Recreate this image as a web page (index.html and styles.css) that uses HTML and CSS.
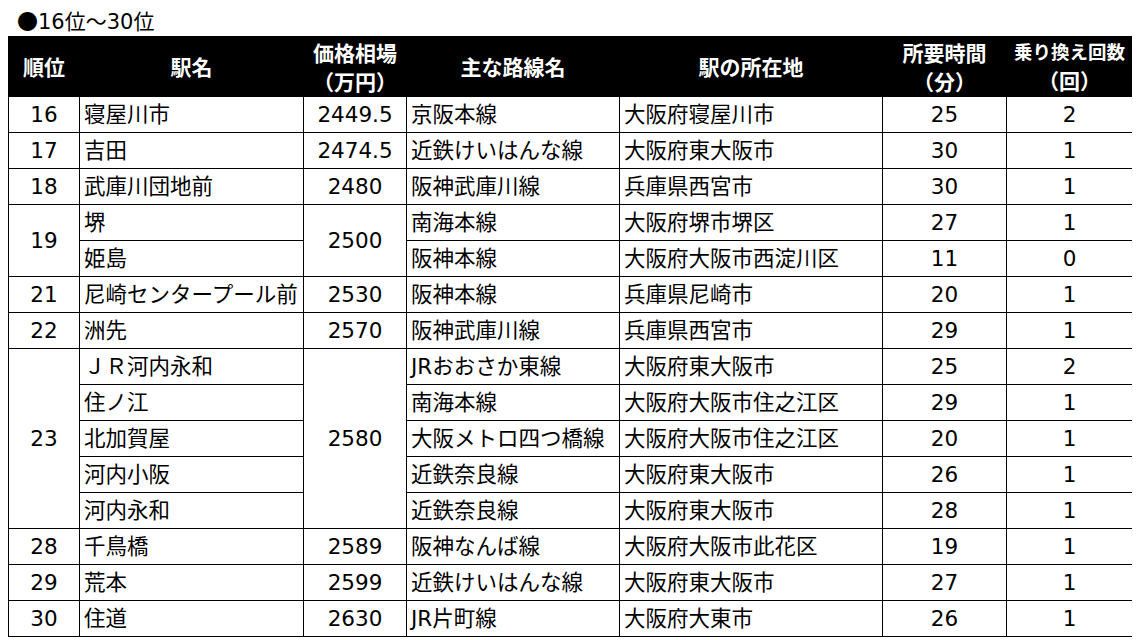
FILE: index.html
```html
<!DOCTYPE html>
<html lang="ja">
<head>
<meta charset="utf-8">
<link rel="stylesheet" href="styles.css">
</head>
<body>
<div class="title"><span class="dot">●</span>16位～30位</div>
<table class="rank">
<colgroup>
<col class="c-rank"><col class="c-name"><col class="c-price"><col class="c-line"><col class="c-loc"><col class="c-time"><col class="c-trans">
</colgroup>
<thead>
<tr>
<th>順位</th><th>駅名</th><th>価格相場<br>（万円）</th><th>主な路線名</th><th>駅の所在地</th><th>所要時間<br>（分）</th><th class="narrow">乗り換え回数<br><span class="wide">（回）</span></th>
</tr>
</thead>
<tbody>
<tr><td class="ctr">16</td><td class="lft">寝屋川市</td><td class="ctr">2449.5</td><td class="lft">京阪本線</td><td class="lft">大阪府寝屋川市</td><td class="ctr">25</td><td class="ctr">2</td></tr>
<tr><td class="ctr">17</td><td class="lft">吉田</td><td class="ctr">2474.5</td><td class="lft">近鉄けいはんな線</td><td class="lft">大阪府東大阪市</td><td class="ctr">30</td><td class="ctr">1</td></tr>
<tr><td class="ctr">18</td><td class="lft">武庫川団地前</td><td class="ctr">2480</td><td class="lft">阪神武庫川線</td><td class="lft">兵庫県西宮市</td><td class="ctr">30</td><td class="ctr">1</td></tr>
<tr><td class="ctr" rowspan="2">19</td><td class="lft">堺</td><td class="ctr" rowspan="2">2500</td><td class="lft">南海本線</td><td class="lft">大阪府堺市堺区</td><td class="ctr">27</td><td class="ctr">1</td></tr>
<tr><td class="lft">姫島</td><td class="lft">阪神本線</td><td class="lft">大阪府大阪市西淀川区</td><td class="ctr">11</td><td class="ctr">0</td></tr>
<tr><td class="ctr">21</td><td class="lft">尼崎センタープール前</td><td class="ctr">2530</td><td class="lft">阪神本線</td><td class="lft">兵庫県尼崎市</td><td class="ctr">20</td><td class="ctr">1</td></tr>
<tr><td class="ctr">22</td><td class="lft">洲先</td><td class="ctr">2570</td><td class="lft">阪神武庫川線</td><td class="lft">兵庫県西宮市</td><td class="ctr">29</td><td class="ctr">1</td></tr>
<tr><td class="ctr" rowspan="5">23</td><td class="lft">ＪＲ河内永和</td><td class="ctr" rowspan="5">2580</td><td class="lft">JRおおさか東線</td><td class="lft">大阪府東大阪市</td><td class="ctr">25</td><td class="ctr">2</td></tr>
<tr><td class="lft">住ノ江</td><td class="lft">南海本線</td><td class="lft">大阪府大阪市住之江区</td><td class="ctr">29</td><td class="ctr">1</td></tr>
<tr><td class="lft">北加賀屋</td><td class="lft">大阪メトロ四つ橋線</td><td class="lft">大阪府大阪市住之江区</td><td class="ctr">20</td><td class="ctr">1</td></tr>
<tr><td class="lft">河内小阪</td><td class="lft">近鉄奈良線</td><td class="lft">大阪府東大阪市</td><td class="ctr">26</td><td class="ctr">1</td></tr>
<tr><td class="lft">河内永和</td><td class="lft">近鉄奈良線</td><td class="lft">大阪府東大阪市</td><td class="ctr">28</td><td class="ctr">1</td></tr>
<tr><td class="ctr">28</td><td class="lft">千鳥橋</td><td class="ctr">2589</td><td class="lft">阪神なんば線</td><td class="lft">大阪府大阪市此花区</td><td class="ctr">19</td><td class="ctr">1</td></tr>
<tr><td class="ctr">29</td><td class="lft">荒本</td><td class="ctr">2599</td><td class="lft">近鉄けいはんな線</td><td class="lft">大阪府東大阪市</td><td class="ctr">27</td><td class="ctr">1</td></tr>
<tr><td class="ctr">30</td><td class="lft">住道</td><td class="ctr">2630</td><td class="lft">JR片町線</td><td class="lft">大阪府大東市</td><td class="ctr">26</td><td class="ctr">1</td></tr>
</tbody>
</table>
</body>
</html>
```

FILE: styles.css
```css
body {
  margin: 8px;
  background: #fff;
  color: #000;
  font-family: "DejaVu Sans", "Noto Sans CJK JP", sans-serif;
}
.title {
  height: 28px;
  line-height: 24px;
  font-size: 21px;
  padding-left: 9px;
}
.dot {
  font-family: "Noto Sans CJK JP", sans-serif;
}
.rank {
  border-collapse: collapse;
  table-layout: fixed;
  width: 1124px;
  font-size: 21.5px;
}
.c-rank { width: 71px; }
.c-name { width: 224px; }
.c-price { width: 103px; }
.c-line { width: 213px; }
.c-loc { width: 263px; }
.c-time { width: 124px; }
.c-trans { width: 126px; }
.rank th {
  background: #000;
  color: #fff;
  font-family: "Noto Sans CJK JP", sans-serif;
  font-weight: 700;
  font-size: 21px;
  line-height: 29px;
  height: 59px;
  padding: 0;
  border: 1px solid #000;
  text-align: center;
  white-space: nowrap;
}
.rank th.narrow {
  font-size: 18.5px;
}
.rank th .wide {
  font-size: 21px;
}
.rank td {
  border: 1px solid #000;
  height: 35px;
  padding: 0 4px;
  line-height: 35px;
  white-space: nowrap;
  overflow: hidden;
}
.ctr { text-align: center; }
.lft { text-align: left; }
```
